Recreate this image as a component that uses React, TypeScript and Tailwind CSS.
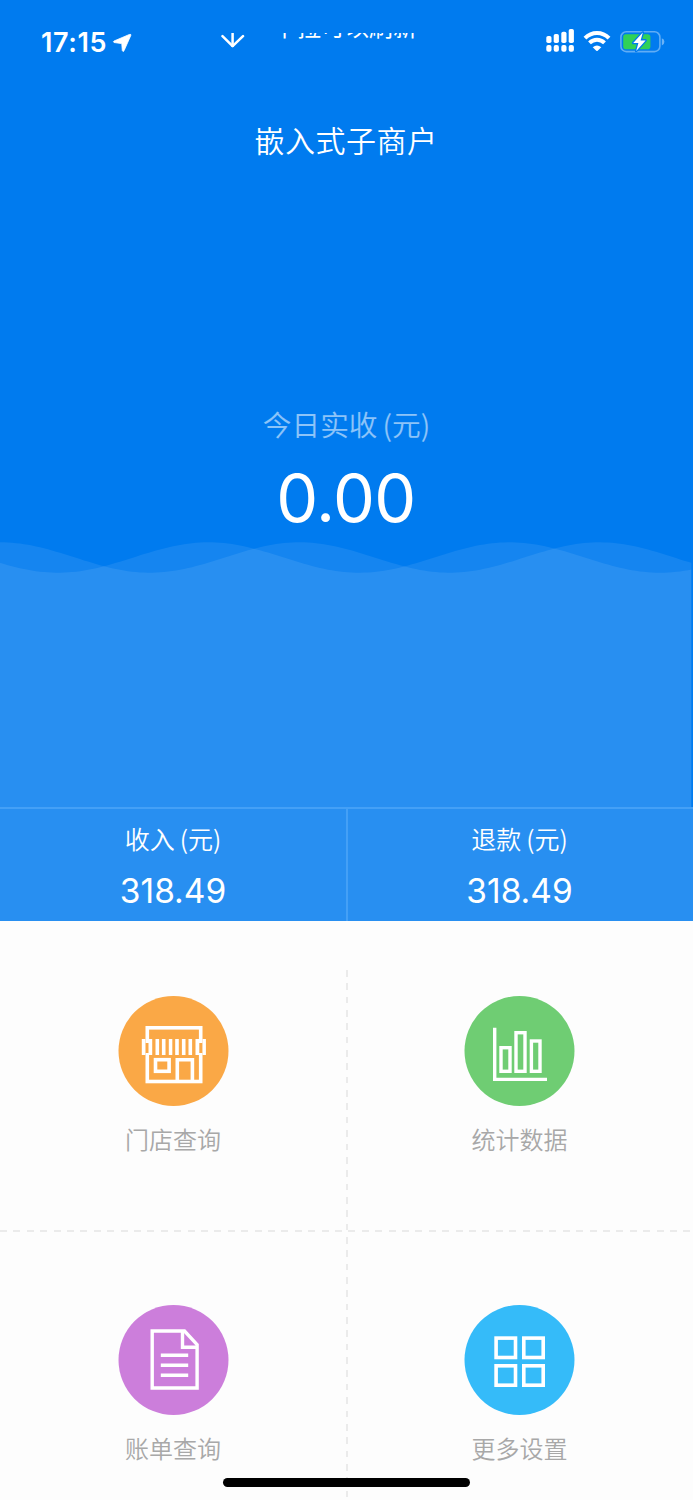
import type { ReactNode } from "react";

/* ------------------------------------------------------------------
   Status bar icons
------------------------------------------------------------------- */
function LocationIcon() {
  return (
    <svg width="20" height="20" viewBox="0 0 20 20" className="ml-[5px]">
      <path
        d="M18.8 2.4L12 17.8Q11 19.3 10.3 17.6L9.8 11.2Q9.7 10.6 9.1 10.5L2 9.5Q0.8 8.8 2 8L17.3 1.5Q19.4 0.9 18.8 2.4Z"
        fill="white"
        stroke="white"
        strokeWidth="0.8"
      />
    </svg>
  );
}

function PullArrowIcon() {
  return (
    <svg width="24" height="17" viewBox="0 0 24 17" fill="none" stroke="white" strokeWidth="2.5">
      <path d="M11.6 0V14" />
      <path d="M1.5 3.2L11.6 13.2L22 3.2" strokeLinecap="round" strokeLinejoin="round" />
    </svg>
  );
}

function SignalIcon() {
  return (
    <svg width="29" height="24" viewBox="0 0 29 24" fill="white">
      <rect x="0.3" y="7" width="5.2" height="7" rx="1.8" />
      <rect x="7.7" y="5" width="5.2" height="9" rx="1.8" />
      <rect x="15.3" y="2.8" width="5.2" height="11.2" rx="1.8" />
      <rect x="22.7" y="0" width="5.2" height="14" rx="1.8" />
      <rect x="0.3" y="16" width="5.2" height="6.8" rx="2" />
      <rect x="7.7" y="16" width="5.2" height="6.8" rx="2" />
      <rect x="15.3" y="16" width="5.2" height="6.8" rx="2" />
      <rect x="22.7" y="16" width="5.2" height="6.8" rx="2" />
    </svg>
  );
}

function WifiIcon() {
  return (
    <svg width="28" height="22" viewBox="0 0 28 22" fill="none" stroke="white" strokeWidth="4">
      <path d="M2 8.1C8.8 1.2 19.2 1.2 26 8.1" />
      <path d="M6.5 12.9C10.8 8.8 17.2 8.8 21.5 12.9" />
      <path d="M9.7 17.2Q14 13.7 18.3 17.2L14.7 20.8Q14 21.4 13.3 20.8Z" fill="white" stroke="none" />
    </svg>
  );
}

function BatteryIcon() {
  return (
    <svg width="45" height="24" viewBox="0 0 45 24">
      <rect x="0.9" y="1.8" width="39" height="19.8" rx="5.4" fill="none" stroke="white" strokeOpacity="0.38" strokeWidth="1.6" />
      <path d="M41.8 8.2Q44.4 9 44.4 11.8T41.8 15.4Z" fill="white" fillOpacity="0.42" />
      <rect x="3.2" y="4.2" width="27.2" height="15" rx="2.8" fill="#30d158" />
      <path
        d="M22.8 2.6L13.2 13H18.4L16.2 21L25.6 10.4H20.6Z"
        fill="white"
        stroke="#007bef"
        strokeWidth="2.6"
        strokeLinejoin="round"
        paintOrder="stroke"
      />
    </svg>
  );
}

/* ------------------------------------------------------------------
   Menu icons, all drawn in a 110 x 110 disc
------------------------------------------------------------------- */
function StoreIcon() {
  return (
    <g>
      <rect x="28.8" y="31.8" width="53.4" height="53.7" />
      <rect x="37" y="63.7" width="13.6" height="11.6" />
      <path d="M58.8 85V63.7H73.9V85" />
      <g fill="#faa846" stroke="none">
        <rect x="26.8" y="47" width="4.2" height="10" />
        <rect x="80" y="47" width="4.2" height="10" />
      </g>
      <g fill="white" stroke="none">
        <rect x="23.3" y="43" width="3.6" height="16" />
        <rect x="30" y="43" width="3.7" height="16" />
        <rect x="37" y="43" width="3.6" height="16" />
        <rect x="43.4" y="43" width="3.6" height="16" />
        <rect x="50.3" y="43" width="3.5" height="16" />
        <rect x="56.7" y="43" width="3.6" height="16" />
        <rect x="63.4" y="43" width="3.6" height="16" />
        <rect x="70" y="43" width="3.6" height="16" />
        <rect x="77" y="43" width="3.8" height="16" />
        <rect x="84" y="43" width="3.4" height="16" />
      </g>
    </g>
  );
}

function ChartIcon() {
  return (
    <g strokeWidth="3.4">
      <path d="M30.2 31.7V83.4H82.5" />
      <rect x="36.5" y="51.7" width="9" height="23.6" />
      <rect x="51.5" y="36.7" width="9" height="38.6" />
      <rect x="66.9" y="45" width="8.6" height="30.3" />
    </g>
  );
}

function BillIcon() {
  return (
    <g strokeWidth="3.4">
      <path d="M33.7 26V83H78.6V39.6L66 26Z" />
      <path d="M64 26V42.3H78.6" />
      <path d="M42.3 50.2H69.7M42.3 60.2H69.7M42.3 70.2H69.7" strokeWidth="3.6" />
    </g>
  );
}

function MoreIcon() {
  return (
    <g>
      <rect x="31.6" y="33.1" width="19.4" height="19.4" />
      <rect x="59.3" y="33.1" width="19.4" height="19.4" />
      <rect x="31.6" y="60.8" width="19.4" height="19.4" />
      <rect x="59.3" y="60.8" width="19.4" height="19.4" />
    </g>
  );
}

/* ------------------------------------------------------------------
   Waves
------------------------------------------------------------------- */
// Sine surface with its crest at x = crest, closed down to the bottom edge
function wavePath(crest: number, period: number) {
  let d = "M0 267";
  for (let x = 0; x <= 692; x += 4) {
    const px = Math.min(x, 691.3);
    const y = 17.5 - 15.2 * Math.cos((2 * Math.PI * (px - crest)) / period);
    d += `L${px} ${y.toFixed(2)}`;
  }
  return d + "V267Z";
}

function Waves() {
  return (
    <svg width="693" height="267" viewBox="0 0 693 267" fill="#ffffff" fillOpacity="0.081" className="block shrink-0">
      <path d={wavePath(0, 299.6)} />
      <path d={wavePath(208.5, 301)} />
    </svg>
  );
}

function Stat({ label, value }: { label: string; value: string }) {
  return (
    <div className="flex flex-col items-center pt-[13px] text-white">
      <div className="flex h-8 items-center text-[25px] font-[350] leading-8">
        <span>{label}</span>
        <span className="ml-[5px]">(元)</span>
      </div>
      <div className="mt-[17px] font-['Inter'] text-[33.5px] leading-10">{value}</div>
    </div>
  );
}

function MenuItem({ label, color, children }: { label: string; color: string; children: ReactNode }) {
  return (
    <button className="flex flex-col items-center">
      <svg width="111" height="111" viewBox="-0.5 -1 111 111" fill="none" stroke="white" strokeWidth="3.6">
        <circle cx="55" cy="55" r="55" fill={color} stroke="none" />
        {children}
      </svg>
      <span className="mt-[17px] text-[24px] font-[350] leading-8 text-[#a8a8a8]">{label}</span>
    </button>
  );
}

export default function App() {
  return (
    <div className="relative flex h-[1500px] w-[693px] flex-col overflow-hidden bg-[#fdfdfd] font-['Noto_Sans_CJK_SC',sans-serif]">
      <section className="flex h-[921px] shrink-0 flex-col bg-[#007bef]">
        {/* Status bar */}
        <header className="flex h-[82px] shrink-0 items-start text-white">
          <div className="flex w-[221px] items-center pt-[32px] pl-[41px]">
            <span className="pt-px font-['Inter'] text-[27px] font-semibold leading-5 tracking-[0.6px]">17:15</span>
            <LocationIcon />
          </div>
          <div className="mt-[33px] flex h-[17px] items-start overflow-hidden">
            <PullArrowIcon />
            <span className="-mt-[23px] ml-[28px] text-[24px] leading-8">下拉可以刷新</span>
          </div>
          <div className="ml-auto flex items-start pt-[29px] pr-[28px]">
            <SignalIcon />
            <div className="mt-px ml-[8px]">
              <WifiIcon />
            </div>
            <div className="mt-px ml-[9px]">
              <BatteryIcon />
            </div>
          </div>
        </header>

        <h1 className="mt-[37px] pr-px text-center text-[30px] font-[350] leading-10 tracking-[0.5px] text-white">
          嵌入式子商户
        </h1>

        {/* Today's total */}
        <div className="mt-[245px] flex h-10 items-center justify-center text-[28.7px] font-[350] text-white/55">
          <span>今日实收</span>
          <span className="ml-[5px]">(元)</span>
        </div>
        <div className="mt-[18px] h-[78px] pr-px text-center font-['Inter'] text-[66.5px] leading-[72px] tracking-[-0.5px] text-white">
          0.00
        </div>

        <Waves />

        {/* Income / refund */}
        <div className="grid h-[114px] shrink-0 grid-cols-[348px_343px] border-t-2 border-[#44a0f6] bg-[#288ff1]">
          <div className="border-r-2 border-[#44a0f6]">
            <Stat label="收入" value="318.49" />
          </div>
          <Stat label="退款" value="318.49" />
        </div>
      </section>

      {/* Menu */}
      <nav className="flex flex-col">
        <div className="grid h-[309px] grid-cols-[346px_2px_343px]">
          <div className="flex justify-center pt-[74px]">
            <MenuItem label="门店查询" color="#faa846">
              <StoreIcon />
            </MenuItem>
          </div>
          <div className="mt-[49px] bg-[repeating-linear-gradient(to_bottom,#ebebeb_0_6.6px,transparent_6.6px_13.35px)]" />
          <div className="flex justify-center pt-[74px]">
            <MenuItem label="统计数据" color="#6fcd73">
              <ChartIcon />
            </MenuItem>
          </div>
        </div>
        <div className="h-[2px] bg-[repeating-linear-gradient(to_right,#ebebeb_0_7px,transparent_7px_13.4px)]" />
        <div className="grid h-[268px] grid-cols-[346px_2px_343px]">
          <div className="flex justify-center pt-[72px]">
            <MenuItem label="账单查询" color="#cc7edb">
              <BillIcon />
            </MenuItem>
          </div>
          <div className="mt-[5px] bg-[repeating-linear-gradient(to_bottom,#ebebeb_0_6.6px,transparent_6.6px_13.35px)]" />
          <div className="flex justify-center pt-[72px]">
            <MenuItem label="更多设置" color="#35bbf9">
              <MoreIcon />
            </MenuItem>
          </div>
        </div>
      </nav>

      {/* Home indicator */}
      <div className="absolute top-[1478px] left-[223px] h-[9px] w-[247px] rounded-full bg-black" />
    </div>
  );
}
